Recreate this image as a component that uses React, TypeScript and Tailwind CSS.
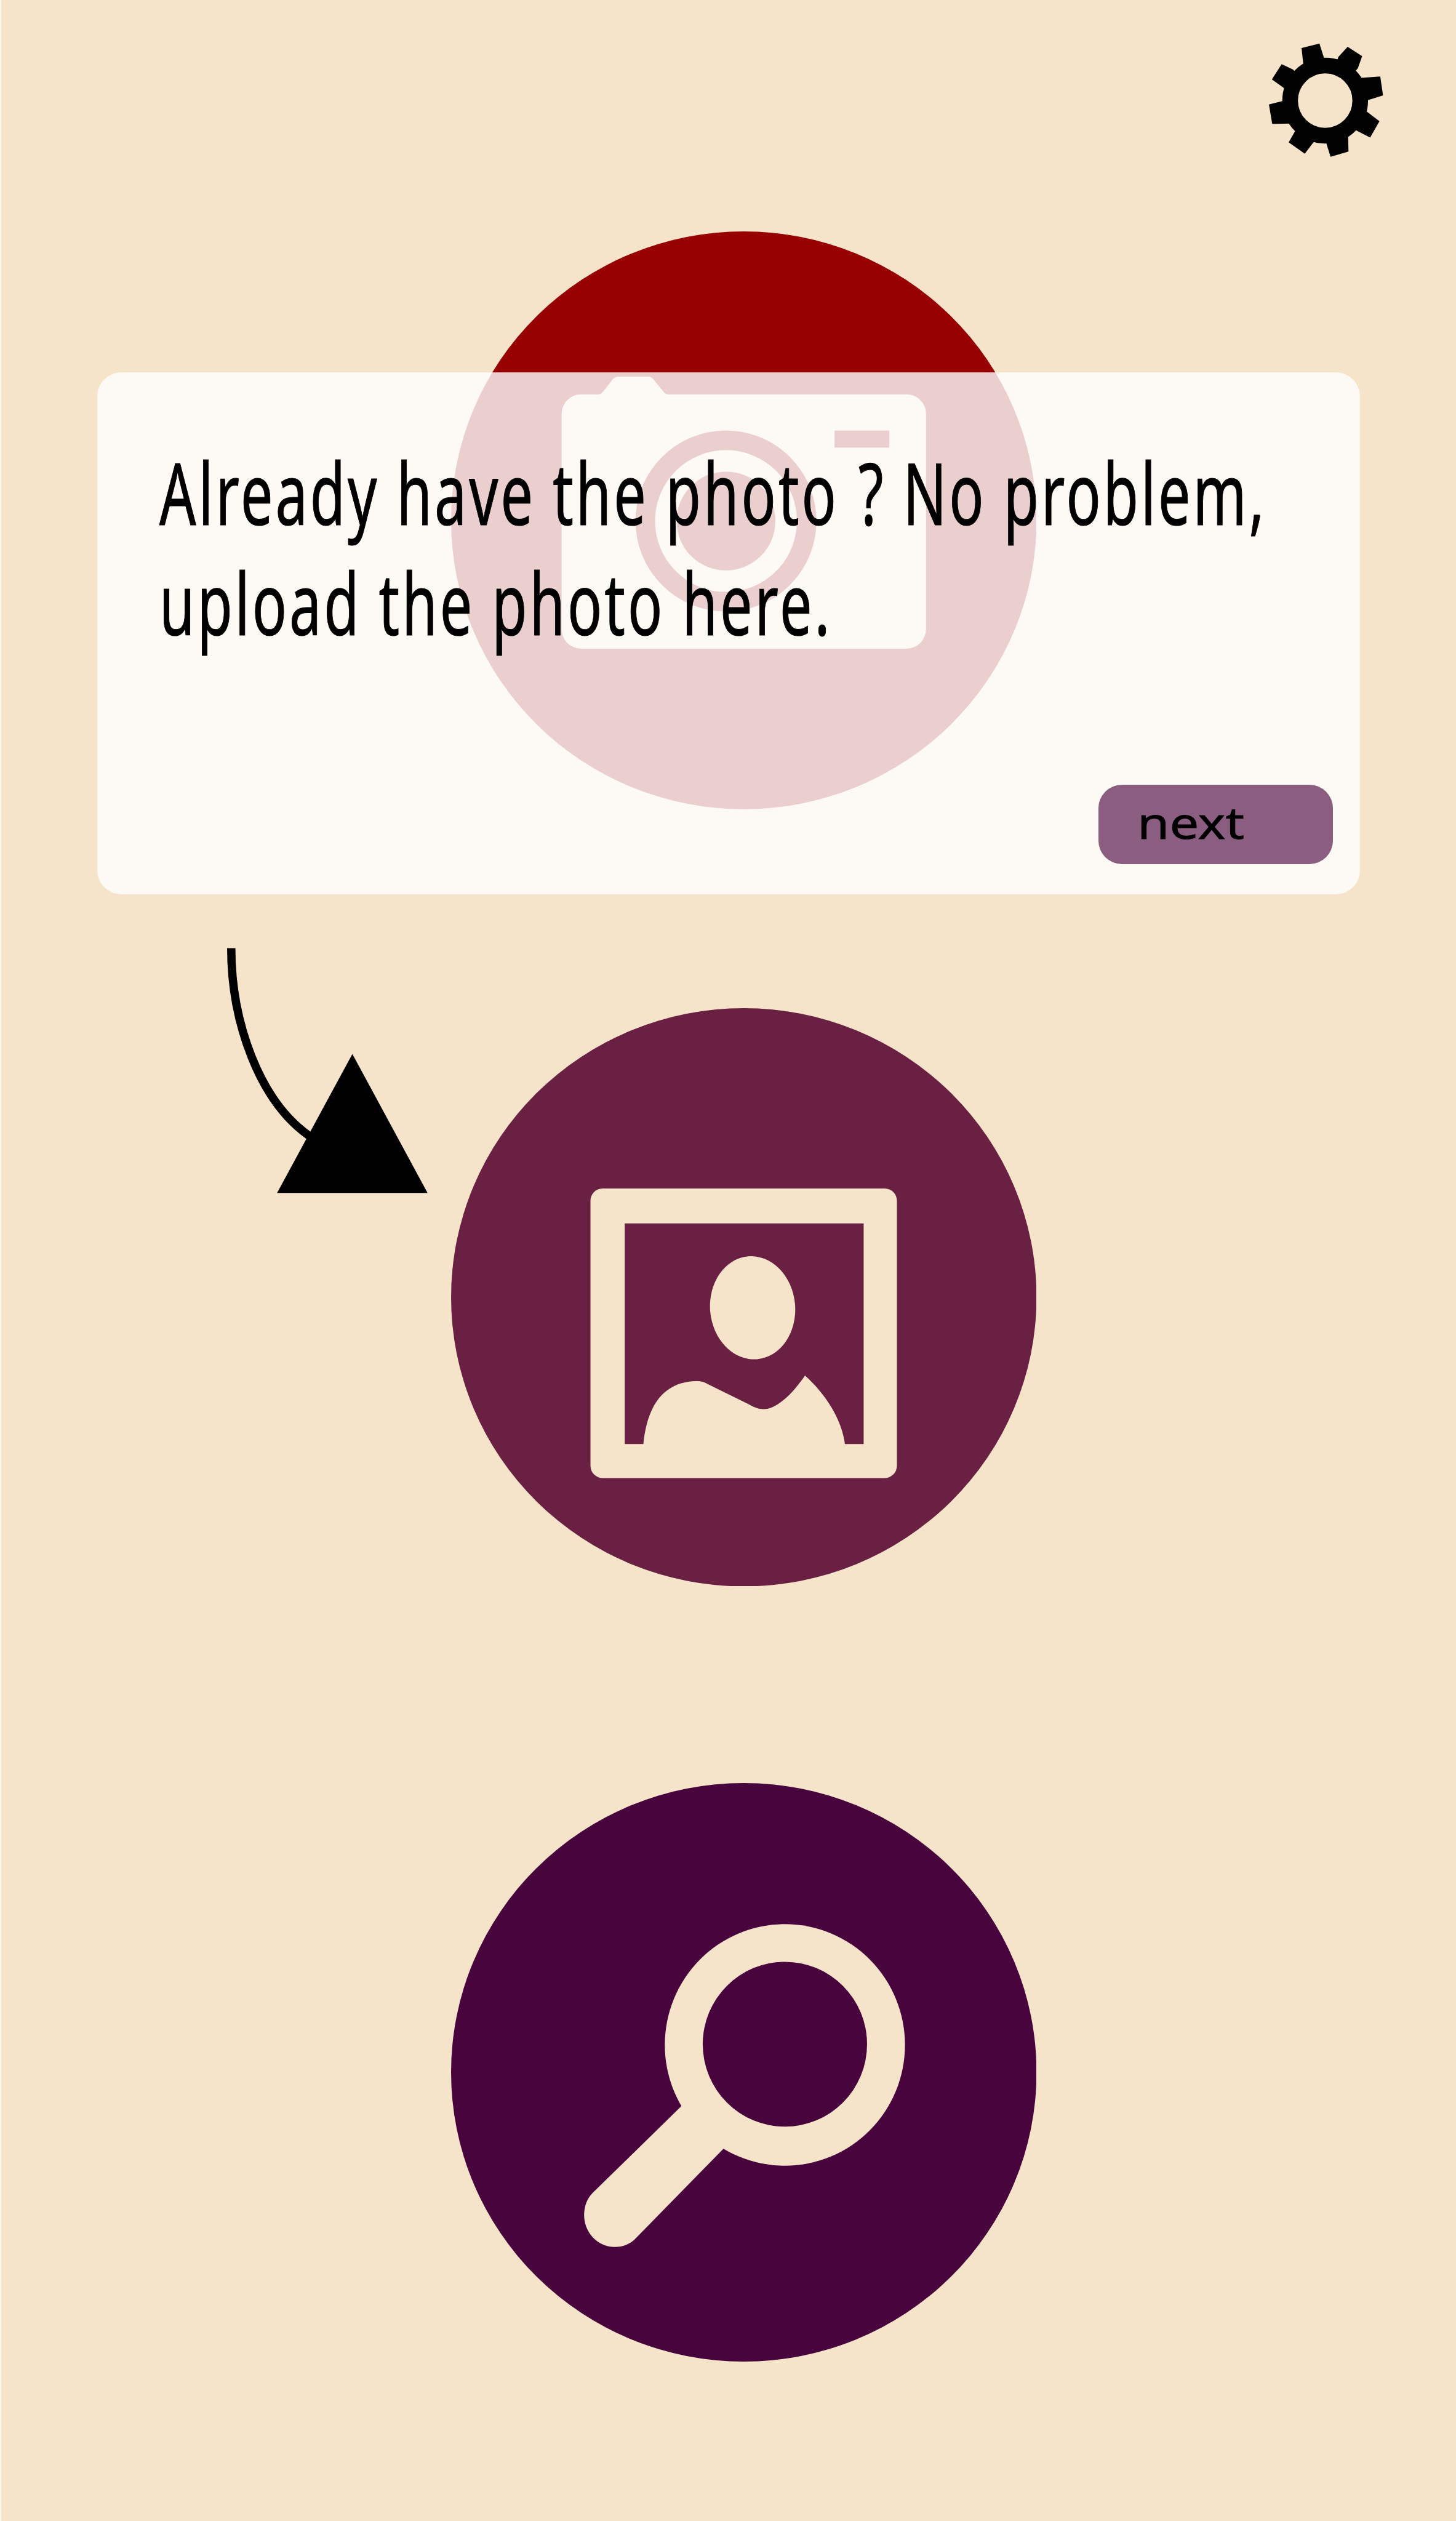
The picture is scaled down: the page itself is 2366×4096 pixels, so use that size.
import React from "react";

const CREAM = "#f6e4ca";

function Gear() {
  return (
    <svg viewBox="0 0 900 870" className="h-[230.5px] w-[238.4px]" aria-label="Settings">
      <g fill="#030203">
        <path d="M312 205 L302 113 L412 86 L436 162 L460 260 L340 280 Z" />
        <path d="M528 168 L585 106 L674 163 L648 236 L600 300 L500 250 Z" />
        <path d="M666 296 L785 288 L802 404 L718 430 L640 450 L620 300 Z" />
        <path d="M706 506 L780 562 L723 662 L640 620 L600 560 L640 480 Z" />
        <path d="M588 655 L590 748 L480 780 L456 704 L450 640 L560 600 Z" />
        <path d="M370 698 L322 762 L223 692 L262 624 L320 560 L420 640 Z" />
        <path d="M242 577 L122 578 L102 460 L188 438 L260 420 L280 560 Z" />
        <path d="M190 356 L120 306 L180 212 L250 245 L300 300 L240 400 Z" />
      </g>
      <circle cx="447" cy="436" r="215" fill="none" stroke="#030203" strokeWidth="96" />
    </svg>
  );
}

function CameraButton() {
  return (
    <svg viewBox="922 473 1197 1181" preserveAspectRatio="none" className="block h-[938.7px] w-[951.4px]">
      <ellipse cx="1520.5" cy="1063.5" rx="598.5" ry="590.5" fill="#970102" />
      <rect x="1148" y="806" width="745" height="520" rx="40" fill={CREAM} />
      <path d="M1218 808 Q1228 808 1235 798 L1251 777 Q1256 770 1264 770 L1325 770 Q1332 770 1337 777 L1354 798 Q1361 808 1370 808 Z" fill={CREAM} />
      <circle cx="1484" cy="1065" r="165" fill="none" stroke="#970102" strokeWidth="40" />
      <circle cx="1484" cy="1065" r="101" fill="#970102" />
      <rect x="1706" y="880" width="112" height="35" fill="#970102" />
    </svg>
  );
}

function PhotoButton() {
  return (
    <svg viewBox="922 2060 1197 1182" preserveAspectRatio="none" className="block h-[939.5px] w-[951.4px]">
      <ellipse cx="1520.5" cy="2651" rx="598.5" ry="591" fill="#6a2042" />
      <rect x="1207" y="2428.5" width="626.5" height="592" rx="25" fill={CREAM} />
      <rect x="1277" y="2500" width="488.5" height="451" fill="#6a2042" />
      <ellipse cx="1538.5" cy="2672.5" rx="87" ry="105.5" transform="rotate(-5 1538.5 2672.5)" fill={CREAM} />
      <path
        d="M1315 2953 C1321 2885 1348 2824 1423 2822.5 Q1436 2822 1446 2828 L1531 2870 C1558 2886 1575 2881 1598 2864 C1620 2847 1634 2827 1645.7 2811 C1684 2845 1721 2898 1727.5 2953 Z"
        fill={CREAM}
      />
    </svg>
  );
}

function SearchButton() {
  return (
    <svg viewBox="922 3643.5 1197 1183" preserveAspectRatio="none" className="block h-[940px] w-[951.4px]">
      <ellipse cx="1520.5" cy="4235" rx="598.5" ry="591.5" fill="#48043d" />
      <path
        d="M1395 4302 L1211 4482 Q1194 4500 1194 4527 A62 65 0 0 0 1256 4592 Q1281 4592 1297 4577 L1480 4390 L1530 4300 L1450 4260 Z"
        fill={CREAM}
      />
      <ellipse cx="1604.5" cy="4179" rx="245.5" ry="247" fill={CREAM} />
      <ellipse cx="1604.5" cy="4177.5" rx="168" ry="168.5" fill="#48043d" />
    </svg>
  );
}

function Arrow() {
  return (
    <svg viewBox="460 1938 414 501" className="absolute left-[363.6px] top-[1540.4px] h-[398.2px] w-[329px]">
      <path d="M472.3 1938.5 C472.3 2090 530 2250 630 2321 L650 2334" fill="none" stroke="#000" strokeWidth="17" />
      <path d="M720 2155 L873.7 2439 L566 2439 Z" fill="#000" />
    </svg>
  );
}

function Dialog() {
  return (
    <section className="absolute left-[156.2px] top-[605.2px] flex h-[848px] w-[2051.4px] flex-col justify-between rounded-[39px] bg-white/81 pb-[49.6px] pl-[100.5px] pr-[43.7px] pt-[105px]">
      <p className="origin-left scale-x-[0.67] whitespace-nowrap font-['Noto_Sans'] text-[139px] leading-[179px] tracking-[5.9px] text-black [-webkit-text-stroke:1.2px_black]">
        Already have the photo <span className="ml-[6px]">?</span> No problem,
        <br />
        upload the photo here.
      </p>
      <button className="flex h-[128.5px] w-[381px] self-end rounded-[38px] bg-[#8b5e81] pl-[62.8px]">
        <span className="origin-left scale-x-[1.2] font-['Noto_Sans'] text-[70.7px] leading-[121.6px] text-black [-webkit-text-stroke:0.8px_black]">
          next
        </span>
      </button>
    </section>
  );
}

export default function App() {
  return (
    <main className="relative flex h-[4096px] w-[2366px] flex-col overflow-hidden border-l-2 border-[#fcf6ee] bg-[#f6e4ca]">
      <header className="flex justify-end pr-[92.8px] pt-[47.7px]">
        <Gear />
      </header>
      <nav className="ml-[731px] mt-[97.7px] flex flex-col">
        <CameraButton />
        <div className="mt-[323px]">
          <PhotoButton />
        </div>
        <div className="mt-[319.5px]">
          <SearchButton />
        </div>
      </nav>
      <Dialog />
      <Arrow />
    </main>
  );
}
